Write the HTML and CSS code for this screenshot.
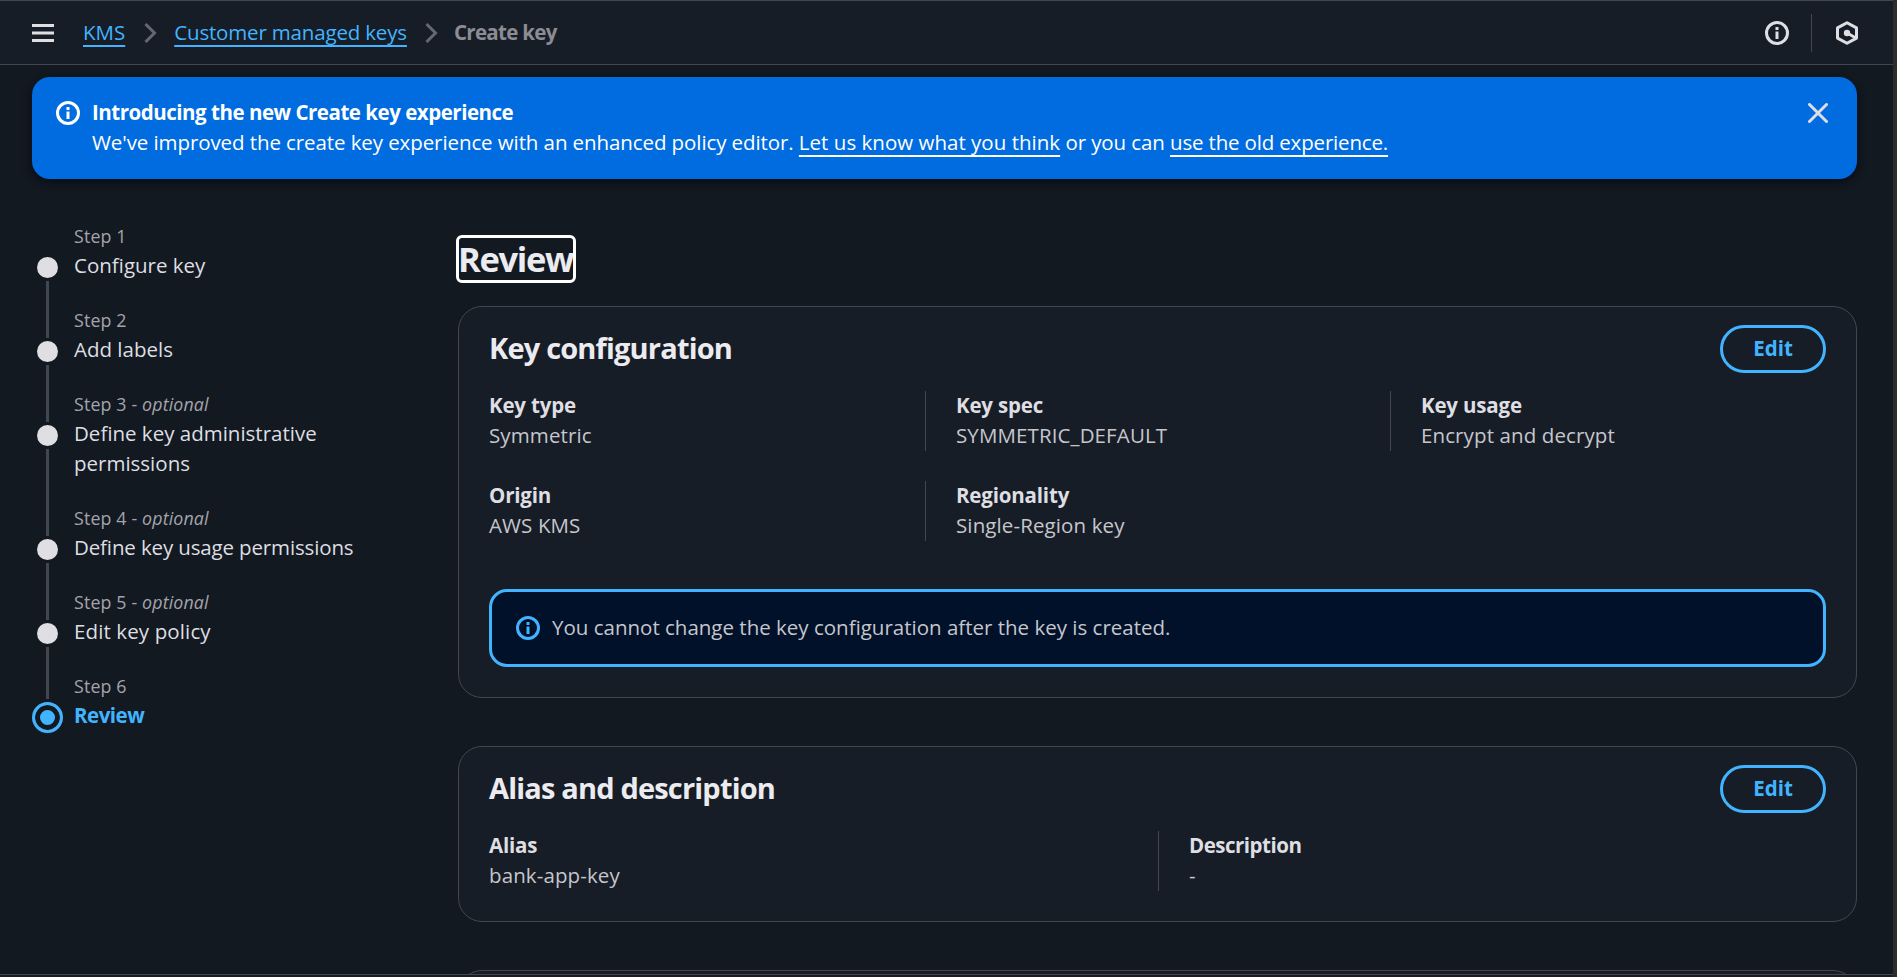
FILE: index.html
```html
<!DOCTYPE html>
<html lang="en">
<head>
<meta charset="utf-8">
<title>Create key</title>
<link rel="stylesheet" href="styles.css">
</head>
<body>
<div class="app">
  <header class="topbar">
    <svg class="menu" width="22" height="18" viewBox="0 0 22 18"><path d="M0 1.500h22M0 9h22M0 16.500h22" stroke="currentColor" stroke-width="3"/></svg>
    <nav class="breadcrumbs">
      <a class="crumb">KMS</a>
      <svg class="chevron" width="13" height="20" viewBox="0 0 13 20"><path d="M1.500 1l9 9-9 9" fill="none" stroke="currentColor" stroke-width="3"/></svg>
      <a class="crumb crumb-keys">Customer managed keys</a>
      <svg class="chevron chevron-last" width="13" height="20" viewBox="0 0 13 20"><path d="M1.500 1l9 9-9 9" fill="none" stroke="currentColor" stroke-width="3"/></svg>
      <span class="current">Create key</span>
    </nav>
    <div class="tools">
      <svg width="24" height="24" viewBox="0 0 24 24"><circle cx="12" cy="12" r="10.500" fill="none" stroke="currentColor" stroke-width="3"/><path d="M10.500 6h3v3h-3zM10.500 10.500h3V18h-3z" fill="currentColor"/></svg>
      <span class="divider"></span>
      <svg width="24" height="24" viewBox="0 0 24 24"><path d="M12 1.700l9.500 5.200v10.200L12 22.300l-9.500-5.200V6.900z" fill="none" stroke="currentColor" stroke-width="3" stroke-linejoin="round"/><circle cx="12" cy="12" r="3.200" fill="currentColor"/><path d="M12 12l9 5" stroke="currentColor" stroke-width="3"/></svg>
    </div>
  </header>

  <section class="flash">
    <svg class="flash-icon" width="24" height="24" viewBox="0 0 24 24"><circle cx="12" cy="12" r="10.500" fill="none" stroke="currentColor" stroke-width="3"/><path d="M10.500 6h3v3h-3zM10.500 10.500h3V18h-3z" fill="currentColor"/></svg>
    <div class="flash-text">
      <div class="flash-title">Introducing the new Create key experience</div>
      <div class="flash-body">We've improved the create key experience with an enhanced policy editor. <a class="link-think">Let us know what you think</a> or you can <a class="link-old">use the old experience.</a></div>
    </div>
    <svg class="close" width="20" height="20" viewBox="0 0 20 20"><path d="M1.500 1.500l17 17M18.500 1.500l-17 17" stroke="currentColor" stroke-width="3" stroke-linecap="round"/></svg>
  </section>

  <div class="layout">
    <ol class="steps">
      <li class="step"><div class="rail"><i class="dot"></i><i class="line"></i></div><div class="step-text"><div class="step-no">Step 1</div><div class="step-name">Configure key</div></div></li>
      <li class="step"><div class="rail"><i class="dot"></i><i class="line"></i></div><div class="step-text"><div class="step-no">Step 2</div><div class="step-name">Add labels</div></div></li>
      <li class="step"><div class="rail"><i class="dot"></i><i class="line"></i></div><div class="step-text"><div class="step-no">Step 3 - <em>optional</em></div><div class="step-name">Define key administrative permissions</div></div></li>
      <li class="step"><div class="rail"><i class="dot"></i><i class="line"></i></div><div class="step-text"><div class="step-no">Step 4 - <em>optional</em></div><div class="step-name usage">Define key usage permissions</div></div></li>
      <li class="step"><div class="rail"><i class="dot"></i><i class="line line-last"></i></div><div class="step-text"><div class="step-no">Step 5 - <em>optional</em></div><div class="step-name policy">Edit key policy</div></div></li>
      <li class="step active"><div class="rail"><i class="ring"></i></div><div class="step-text"><div class="step-no">Step 6</div><div class="step-name">Review</div></div></li>
    </ol>

    <main class="content">
      <h1>Review</h1>

      <section class="card">
        <div class="card-head"><h2>Key configuration</h2><button class="edit">Edit</button></div>
        <div class="fields three">
          <div class="field"><div class="label">Key type</div><div class="value">Symmetric</div></div>
          <div class="field"><div class="label">Key spec</div><div class="value">SYMMETRIC_DEFAULT</div></div>
          <div class="field"><div class="label">Key usage</div><div class="value">Encrypt and decrypt</div></div>
          <div class="field"><div class="label">Origin</div><div class="value">AWS KMS</div></div>
          <div class="field"><div class="label">Regionality</div><div class="value">Single-Region key</div></div>
        </div>
        <div class="alert">
          <svg width="24" height="24" viewBox="0 0 24 24"><circle cx="12" cy="12" r="10.500" fill="none" stroke="currentColor" stroke-width="3"/><path d="M10.500 6h3v3h-3zM10.500 10.500h3V18h-3z" fill="currentColor"/></svg>
          <span>You cannot change the key configuration after the key is created.</span>
        </div>
      </section>

      <section class="card">
        <div class="card-head"><h2>Alias and description</h2><button class="edit">Edit</button></div>
        <div class="fields two">
          <div class="field"><div class="label">Alias</div><div class="value">bank-app-key</div></div>
          <div class="field"><div class="label description">Description</div><div class="value">-</div></div>
        </div>
      </section>

      <section class="card"></section>
    </main>
  </div>
  <footer class="footer"></footer>
</div>
</body>
</html>
```

FILE: styles.css
```css
* { box-sizing: border-box; margin: 0; padding: 0; }

html { background: #2d2c2b; }

body {
  width: 1897px;
  height: 977px;
  overflow: hidden;
  font-family: "Open Sans", "Noto Sans", sans-serif;
  font-size: 20.5px;
  line-height: 30px;
  color: #c6c6cd;
}

svg { display: block; flex: none; }

a {
  text-decoration: underline 2px;
  text-underline-offset: 5px;
  text-decoration-skip-ink: none;
}

.app {
  display: flex;
  flex-direction: column;
  width: 1893px;
  height: 977px;
  background: #131920;
}

/* Top bar */
.topbar {
  display: flex;
  align-items: center;
  flex: none;
  height: 65px;
  padding: 1px 34px 0 32px;
  background: #161d26;
  border-top: 1px solid #424650;
  border-bottom: 1px solid #424650;
  color: #dedee3;
}

.breadcrumbs { display: flex; align-items: center; margin-left: 29px; }
.crumb { margin-bottom: 2px; color: #42b4ff; }
.crumb-keys { letter-spacing: -0.17px; }
.chevron { margin: 0 17px 0 19px; color: #656871; }
.chevron-last { margin: 0 16px 0 18px; }
.current { margin-bottom: 2px; color: #8c8c94; font-weight: 700; letter-spacing: -0.7px; }

.tools { display: flex; align-items: center; margin-left: auto; }
.divider { width: 1px; height: 38px; margin: 0 23px 0 22px; background: #424650; }

/* Notification */
.flash {
  display: flex;
  flex: none;
  height: 102px;
  margin: 12px 36px 0 32px;
  padding: 20px 29px 0 24px;
  border-radius: 18px;
  background: #006ce0;
  color: #fff;
  box-shadow: 0 3px 9px 1px rgba(0, 7, 22, 0.6);
}

.flash-icon { margin-top: 4px; }
.flash-text { margin-left: 12px; }
.flash-title { font-weight: 700; letter-spacing: -0.48px; }
.flash-body { letter-spacing: -0.09px; }
.link-think { letter-spacing: 0.02px; }
.link-old { letter-spacing: -0.17px; }
.close { margin: 6px 0 0 auto; color: #dedee3; }

/* Wizard layout */
.layout { display: flex; flex: 1; min-height: 0; overflow: hidden; padding-right: 36px; }

.steps { flex: none; width: 426px; padding: 43px 0 0 32px; margin-right: 32px; list-style: none; }
.step { display: flex; padding-bottom: 26px; }
.rail { display: flex; flex-direction: column; align-items: center; flex: none; width: 31px; margin-bottom: -61px; }
.dot { flex: none; width: 21px; height: 21px; margin-top: 35px; border-radius: 50%; background: #dedee3; }
.line { flex: 1; width: 3px; margin: 3px 0; background: #424650; }
.line-last { margin-bottom: 8px; }
.ring { flex: none; width: 31px; height: 31px; margin-top: 30px; border-radius: 50%; border: 3px solid #42b4ff; background: #42b4ff; box-shadow: inset 0 0 0 5px #131920; }
.step-text { margin-left: 11px; width: 300px; }
.step-no { font-size: 17.8px; line-height: 28px; color: #a4a4ad; letter-spacing: 0.15px; }
.step-name { color: #dedee3; }
.step-name.usage { letter-spacing: -0.14px; }
.step-name.policy { letter-spacing: 0.12px; }
.active .step-name { color: #42b4ff; font-weight: 700; letter-spacing: -0.5px; }
.active .rail { margin-bottom: 0; }

.content { flex: 1; min-width: 0; padding-top: 58px; }

h1 {
  width: 116px;
  height: 44px;
  margin-bottom: 25px;
  border-radius: 4px;
  outline: 3px solid #fff;
  outline-offset: -1px;
  font-size: 34.5px;
  line-height: 43px;
  letter-spacing: -1.35px;
  color: #ebebf0;
}

/* Cards */
.card {
  margin-bottom: 48px;
  padding: 18px 30px 30px;
  border: 1px solid #424650;
  border-radius: 24px;
  background: #161d26;
}

.card-head { display: flex; align-items: center; justify-content: space-between; }
h2 { padding-bottom: 2px; font-size: 29px; line-height: 36px; letter-spacing: -0.82px; color: #ebebf0; }

.edit {
  width: 106px;
  height: 48px;
  padding-bottom: 2px;
  border: 3px solid #42b4ff;
  border-radius: 24px;
  background: none;
  color: #42b4ff;
  font: 700 20.5px/40px "Open Sans", "Noto Sans", sans-serif;
}

.fields { display: grid; row-gap: 30px; margin-top: 18px; }
.three { grid-template-columns: 436px 465px 1fr; }
.two { grid-template-columns: 669px 1fr; }
.field { height: 60px; padding-left: 30px; border-left: 1px solid #424650; }
.three .field:nth-child(3n + 1), .two .field:first-child { padding-left: 0; border-left: 0; }
.label { margin-top: -1px; font-weight: 700; letter-spacing: -0.18px; color: #dedee3; }
.label.description { letter-spacing: -0.5px; }
.value { letter-spacing: 0.11px; }

.alert {
  display: flex;
  align-items: center;
  gap: 12px;
  height: 78px;
  margin-top: 48px;
  padding-left: 24px;
  border: 3px solid #42b4ff;
  border-radius: 18px;
  background: #001129;
}
.alert svg { color: #42b4ff; }
.alert span { margin-bottom: 2px; }

.footer { flex: none; height: 3px; border-top: 1px solid #424650; background: #161d26; }
```
